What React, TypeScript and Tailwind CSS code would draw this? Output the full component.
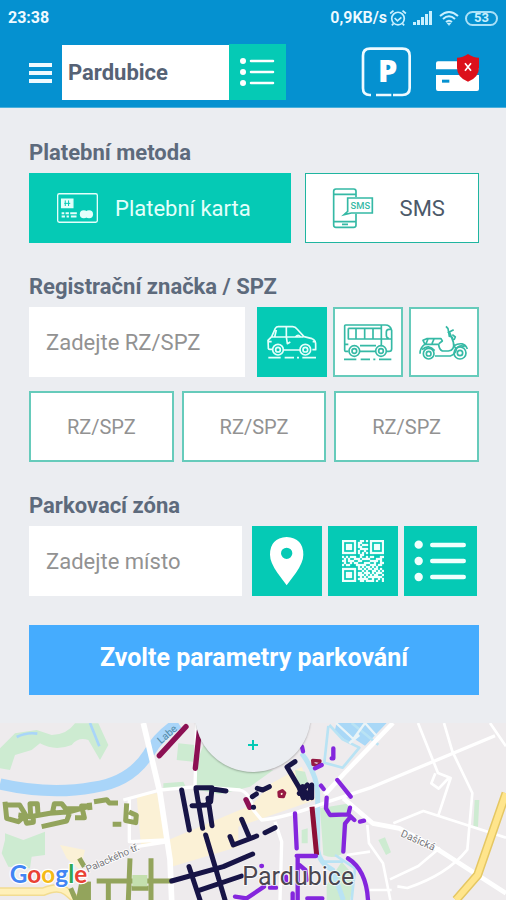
import type { ReactNode } from "react";

function StatusBar() {
  return (
    <div className="flex h-9 items-center justify-between px-2 text-base font-bold">
      <span>23:38</span>
      <div className="flex items-center gap-1.5 font-semibold">
        <span>0,9KB/s</span>
        <svg className="-ml-1 h-[18px] w-[18px]" viewBox="0 0 16 16" fill="none" stroke="#c9f0ff" strokeWidth="1.5">
          <circle cx="8" cy="8.500" r="5.6" />
          <path d="M5 8l2.5 2.5L11 7.500M1 4l3-2.6M15 4l-3-2.6M4 13l-1.5 1.5M12 13l1.5 1.5" />
        </svg>
        <svg className="h-4 w-5" viewBox="0 0 20 16" fill="#c9f0ff">
          <path d="M0 12h3v3H0zM4 10h3v5H4zM8 7h3v8H8zM12 4h3v11h-3zM16 1h3v14h-3z" />
        </svg>
        <svg className="h-4 w-5" viewBox="0 0 20 16" fill="none" stroke="#c9f0ff" strokeWidth="2">
          <path d="M1 6q9-8 18 0M4 9q6-5.500 12 0M7 12q3-2.500 6 0" />
          <path d="M8 13h4l-2 2.500z" fill="#c9f0ff" strokeWidth="0.500" />
        </svg>
        <span className="flex h-[15px] w-[33px] items-center justify-center rounded-full border-2 border-[#a9e0f7] text-[13px] font-bold text-[#c9f0ff]">
          53
        </span>
      </div>
    </div>
  );
}

function Header() {
  return (
    <header className="h-[108px] border-b border-[#4ab0dc] bg-[#0591d0] text-[#effaff]">
      <StatusBar />
      <div className="flex items-center pt-2 pr-[26px] pl-7">
        <button type="button" aria-label="Menu" className="mr-[9px] w-[25px]">
          <svg className="h-6 w-full" viewBox="0 0 25 24" stroke="currentColor" strokeWidth="4">
            <path d="M1 5h23M1 13h23M1 21h23" />
          </svg>
        </button>
        <input
          aria-label="Město"
          defaultValue="Pardubice"
          className="h-[55px] w-0 max-w-[167px] grow bg-white px-1.5 text-[22px] font-bold text-[#566275] outline-none"
        />
        <button type="button" aria-label="Seznam měst" className="h-[56px] w-[57px] bg-[#05cab5]">
          <svg className="h-full w-full" viewBox="0 0 57 56" fill="#fff" stroke="#fff" strokeLinecap="round">
            <path d="M22 17h22M22 28h22M22 39h22" strokeWidth="2.500" />
            <path d="M14 17h.01M14 28h.01M14 39h.01" strokeWidth="6" />
          </svg>
        </button>
        <div className="ml-auto flex items-center gap-6">
          <button type="button" aria-label="Parkování">
            <svg className="h-[51px] w-[50px]" viewBox="327 142 150 153" fill="none" stroke="currentColor" strokeWidth="8">
              <path d="M357 286h-4q-20 0-20-20V168q0-21 21-21h97q22 0 22 21v97q0 21-22 21h-28M372 286h46" />
              <text x="407" y="247" textAnchor="middle" fontFamily="Open Sans, sans-serif" fontWeight="800" fontSize="92" fill="#fff" stroke="none">
                P
              </text>
            </svg>
          </button>
          <button type="button" aria-label="Platební karta není aktivní">
            <svg className="h-[39px] w-[45px]" viewBox="546 159 135 117">
              <path d="M555 184h123v24H549v-18q0-6 6-6zM549 225h129v42q0 6-6 6H555q-6 0-6-6z" fill="#fff" />
              <path d="M567 239h22v9h-22z" fill="#0591d0" />
              <path d="M645 162q15 11 33 11v30q0 29-33 42-33-13-33-42v-30q18 0 33-11z" fill="#dc101b" />
              <path d="M636 190l18 22M654 190l-18 22" stroke="#fff" strokeWidth="5" />
            </svg>
          </button>
        </div>
      </div>
    </header>
  );
}

function Tile({ label, active, className = "w-[70px]", children }: { label: string; active?: boolean; className?: string; children: ReactNode }) {
  return (
    <button
      type="button"
      aria-label={label}
      aria-pressed={!!active}
      className={`h-[70px] shrink-0 ${className} ${active ? "bg-[#05cab5] text-[#e4fffb]" : "bg-white text-[#35b9a5] ring-2 ring-[#66cbbb] ring-inset"}`}
    >
      {children}
    </button>
  );
}

function CarIcon() {
  return (
    <svg className="h-full w-full" viewBox="35 35 210 210" fill="none" stroke="currentColor" strokeWidth="5" strokeLinejoin="round">
      <path d="M82 162H73q-5 0-4-7l-1-20 11-11 11-25q3-5 9-5h43q8 0 13 7l21 23 24 6q12 4 11 20v13h-10M113 164h51M79 125h95M123 94v31l3 20 9-5M93 104l-5 21M150 125q9-10 15-1M68 139h11M202 139h10" />
      <circle cx="98" cy="163" r="16" />
      <circle cx="98" cy="163" r="7" />
      <circle cx="180" cy="163" r="16" />
      <circle cx="180" cy="163" r="7" />
      <path d="M69 187h37M118 187h28M155 187h6M171 187h41" />
    </svg>
  );
}

function BusIcon() {
  return (
    <svg className="h-full w-full" viewBox="263 35 210 210" fill="none" stroke="currentColor" strokeWidth="5" strokeLinejoin="round">
      <path d="M309 168h-9q-2 0-2-3V91q0-2 3-2h119q15 0 19 16v55q0 8-8 8h-7M344 168h46M309 99h99M309 99v32h130M332 99v32M358 99v32M383 99v32M408 89v64M439 102h-8q-8 0-8 8v10q0 8 8 10M344 151h48M298 147h11" />
      <circle cx="327" cy="167" r="16" />
      <circle cx="327" cy="167" r="7" />
      <circle cx="407" cy="167" r="16" />
      <circle cx="407" cy="167" r="7" />
      <path d="M296 192h37M346 192h28M384 192h6M401 192h37" />
    </svg>
  );
}

function ScooterIcon() {
  return (
    <svg className="h-full w-full" viewBox="491 35 210 210" fill="none" stroke="currentColor" strokeWidth="5" strokeLinejoin="round">
      <path d="M524 175q0-18 14-28h42q1 15 11 20h18q20-2 15-26l-10-27-7-4M602 93l6 7 4 23 9 3 5 24 7 13q-3 14-18 19h-46M612 110l13-7M621 118l9 7-4 9M538 145l-5-10 11-5h43l4 7-10 8M548 131l-6 14M560 145l6-14M624 152q32-17 42 9M631 163q10-16 27-9M530 163q20-18 38 3" />
      <circle cx="550" cy="175" r="16" />
      <circle cx="550" cy="175" r="7" />
      <circle cx="644" cy="173" r="18" />
      <circle cx="644" cy="173" r="8" />
    </svg>
  );
}

const QR_ROWS = [
  "111111100110101111111",
  "100000101100001000001",
  "101110101011101011101",
  "101110101100001011101",
  "101110100111101011101",
  "100000101001001000001",
  "111111101010101111111",
  "000000000110000000000",
  "101011100100101100011",
  "010100111011110001110",
  "110111001100001111010",
  "010010110001110010011",
  "101100011111001110110",
  "000000001010110101000",
  "111111101101011011010",
  "100000100010100110101",
  "101110101101110101110",
  "101110101110101011001",
  "101110100101011111110",
  "100000101111100100101",
  "111111100110111101001",
];

function QrIcon() {
  const path = QR_ROWS.map((row, y) => [...row].map((cell, x) => (cell === "1" ? `M${x} ${y}h1v1h-1z` : "")).join("")).join("");
  return (
    <svg className="mx-auto h-[42px] w-[42px]" viewBox="0 0 21 21" fill="#effffc" stroke="#effffc" strokeWidth="0.15">
      <path d={path} />
    </svg>
  );
}

function StreetMap() {
  return (
    <svg className="block h-[177px] w-full" viewBox="0 24 1518 531" preserveAspectRatio="xMidYMid slice" fill="none" strokeLinejoin="round" role="img" aria-label="Mapa Pardubic">
      <rect y="24" width="1518" height="531" fill="#eeebed" />
      <g fill="#fbf1d6">
        <path d="M410 245l65-12 18 140-70 20zM505 375l250-105 60-65 90-50 40 100-230 80v60l-200 60zM180 390l75 15-15 60-40-35z" />
      </g>
      <g fill="#cdebd1">
        <path d="M0 100l45-45 65-10 45 15q45 0 70-35h70l30 65-25 45-35-60q-30-10-50 15-50 20-95-5l-25 20-50 15-15 45-30-5zM535 85l50 5-5 50-50-5zM590 145l20-55 80 60 70 20 60-5-70 50-90 23-75-15zM15 355l55 20 65-25v70l-40 5-5 35-65-5-20-40 10-40zM490 205l60-5 10 22-70 5zM960 280l90-15-15 145q-30 25-65 10zM1135 375l20-8 18 45-15 8zM1424 255h14l-4 80h-14zM905 345l18-5v45h-18zM980 510l45-70 40 45-15 70h-70zM885 165l30 5 10 35-30 20z" />
      </g>
      <path d="M0 207q150 34 280 10 110-15 165-100 30-55 90-93" stroke="#a9d5f9" strokeWidth="34" />
      <path d="M270 24l28 70M50 66q30-15 62-10" stroke="#a9d5f9" strokeWidth="8" />
      <path d="M1010 24h150l-65 68-35-22-16 12-40-34z" fill="#a9d8f7" />
      <g stroke="#b9e3f4" strokeWidth="8">
        <path d="M988 30l40 43 50 25-50 60-55-15 12-110M1055 24l80 65M1005 420l60 40-10 95M970 440h60" />
      </g>
      <path d="M905 115q45 60 48 120v170q5 40 45 60l32 90" stroke="#b9e3f4" strokeWidth="15" />
      <path d="M1008 24l52 48 35-48M1095 24l45 50M1048 85l30-25" stroke="#eaf4f7" strokeWidth="7" />
      <g stroke="#fff" strokeWidth="10">
        <path d="M430 24l50 210 30 200 5 121" strokeWidth="17" />
        <path d="M370 255l110-30 110-10 130 10q30 8 40 60l25 30q65-5 200-55l130-43 370-155M388 250v130l110-5M590 24l-5 195M410 395l95-15M825 320l20 60-5 175" />
        <path d="M1179 24l-145 150-60 65" strokeWidth="14" />
        <path d="M1030 250l88 75 80 15 110 60 210 135" strokeWidth="14" />
        <path d="M1102 330l5 55 42 60 22 110M1254 24l60 150 38 15-38 115M1332 24l25 85 60 125-15 170q-60 75-180 115l-30-5M1470 24l48 70M1180 325l90-37 248 80M1306 175l-12 30 22 16 30-32M1170 493l85-40 65-55M1110 525h65M1040 420l70-10" strokeWidth="8" />
      </g>
      <path d="M0 530h130q45-20 70 0l30 25" stroke="#f2dc91" strokeWidth="26" />
      <path d="M0 530h130q45-20 70 0l30 25" stroke="#fff0b9" strokeWidth="17" />
      <path d="M1518 235l-40 115-45 130-65 75" stroke="#e5c763" strokeWidth="27" />
      <path d="M1518 235l-40 115-45 130-65 75" stroke="#ffe58c" strokeWidth="18" />
      <g stroke="#93a45c" strokeWidth="15">
        <path d="M15 260l5 50 35 10 22-20-18-30H22M55 300l35 5 60-10 60-5 55-15M92 300l-2-34h22l2 32M75 310l5 15 20-3v-22M158 290l5-24h22l12 15h50M125 335l75-17 8-22M225 308h28l-8-35h20M270 285l-2-22M282 260l38-6 8 10h26M380 265l-3 52 30 6 2-22-22-10M338 328h26M238 430l15 25M290 498h225M390 430l-5 125M453 430v125M325 500v55M212 520l15 35M265 500v55M395 520h50" />
      </g>
      <path d="M397 480h45v34h-45z" fill="#c4dfae" />
      <path d="M238 500h34v55h-44z" fill="#93a45c" />
      <g stroke="#8c1053" strokeWidth="16" strokeLinecap="round">
        <path d="M478 122l80-87M598 48l-12 112M738 254l11 23" />
      </g>
      <path d="M936 275l14 145" stroke="#8c1036" strokeWidth="15" />
      <g stroke="#951943" strokeWidth="10">
        <path d="M837 232l10-5 7 7-4 11-12-1zM938 136l22 2-5 15-16-5z" />
      </g>
      <g stroke="#171446" strokeWidth="15" strokeLinecap="round">
        <path d="M545 225l23 120M588 222l20 118M588 218h48l-4 42-14 10-42 2M636 222l42 6M624 250l12 82M725 313l23 54M690 365l10 25 70-27M795 353l30-15M515 498l155-43 88-38M617 360l58 195M567 455l33 100M595 527l130-44M885 140l-24 16 35 59 14 34M898 235l24-25M908 215l15 35 12-40v38M757 245l12-8M772 220l16 5 20-10M760 277h1" />
      </g>
      <g stroke="#8426dd" strokeWidth="13" strokeLinecap="round">
        <path d="M906 95l3 14M1000 100v30h-5M945 160l20-10M1012 195l40 50M963 212l8 10M980 248l-2 32 12 20 55-2 5-20M1045 298l18 17M1080 320l12-3M1048 310l-13 16-5 84M885 295l5 105M890 423h58M893 430v125M898 450l18 15 4 30M1044 430q55 35 60 125M784 453h2M705 545l35 5 52-35M810 518h18M858 485v14M878 535v20M922 550h45" />
      </g>
      <g fill="#77777b" fontFamily="Roboto, sans-serif" fontSize="31" stroke="#fff" strokeWidth="5" paintOrder="stroke">
        <text transform="translate(483 88) rotate(-41)" fill="#538baa" stroke="none">Labe</text>
        <text transform="translate(263 473) rotate(-24)" fontSize="30">Palackého tř.</text>
        <text transform="translate(1200 363) rotate(24)">Dašická</text>
      </g>
      <text x="727" y="510" fill="#4b4750" fontFamily="Roboto, sans-serif" fontSize="75" stroke="#fff" strokeOpacity="0.700" strokeWidth="6" paintOrder="stroke">
        Pardubice
      </text>
      <text x="29" y="504" fontFamily="Lato, sans-serif" fontSize="73" fontWeight="700" stroke="#fff" strokeWidth="7" paintOrder="stroke">
        <tspan fill="#4285f4">G</tspan><tspan fill="#e94235">o</tspan><tspan fill="#f5ba18">o</tspan><tspan fill="#4285f4">g</tspan><tspan fill="#34a853">l</tspan><tspan fill="#e94235">e</tspan>
      </text>
    </svg>
  );
}

const labelClass = "mb-1.5 block text-[22px] leading-7 font-bold text-[#5d6a7c]";
const fieldClass = "h-[70px] w-0 min-w-0 grow bg-white px-[17px] text-[22px] text-[#555] outline-none placeholder:text-[#929292]";

export default function App() {
  return (
    <div className="bg-[#ebedf1] font-[Roboto,sans-serif]">
      <Header />
      <main className="pt-[31px] pr-[27px] pb-7 pl-[29px]">
        <section>
          <h2 className={labelClass}>Platební metoda</h2>
          <div className="grid grid-cols-[3fr_2fr] gap-[14px]">
            <button type="button" aria-pressed="true" className="flex h-[70px] items-center gap-4 bg-[#05cab5] pl-[27px] text-[22px] text-[#e4fffb]">
              <svg className="h-8 w-[43px]" viewBox="165 187 130 96" fill="none" stroke="currentColor" strokeWidth="4">
                <rect x="170" y="192" width="120" height="86" rx="5" />
                <path d="M182 208h34v26h-34z" fill="currentColor" />
                <path d="M193 212v17M203 212v17M190 221h18" stroke="#05cab5" strokeWidth="3" />
                <path d="M182 251h8M194 251h10M208 251h20M182 261h10M197 261h7M210 261h17" strokeWidth="6" />
                <circle cx="249" cy="254" r="12" fill="currentColor" stroke="none" />
                <circle cx="265" cy="254" r="12" fill="currentColor" stroke="none" />
              </svg>
              Platební karta
            </button>
            <button type="button" aria-pressed="false" className="flex h-[70px] items-center gap-[26px] border border-[#1fb5a0] bg-white pl-[26px] text-[22px] text-[#4c5969]">
              <svg className="h-[42px] w-[42px]" viewBox="234 81 126 126" fill="none" stroke="#35b9a5" strokeWidth="5">
                <path d="M306 111V94q0-7-7-7h-53q-7 0-7 7v101q0 7 7 7h53q7 0 7-7v-34M239 103h67M239 185h67M264 193h18" />
                <path d="M281 114h74v45h-63l-22 5 11-10z" fill="#fff" />
                <text x="319" y="148" textAnchor="middle" fontFamily="Roboto, sans-serif" fontSize="28" fontWeight="500" fill="#35b9a5" stroke="none">
                  SMS
                </text>
              </svg>
              SMS
            </button>
          </div>
        </section>

        <section className="mt-[30px]">
          <label htmlFor="plate" className={labelClass}>Registrační značka / SPZ</label>
          <div className="flex gap-1.5">
            <input id="plate" placeholder="Zadejte RZ/SPZ" className={`${fieldClass} mr-1.5`} />
            <Tile label="Auto" active><CarIcon /></Tile>
            <Tile label="Autobus"><BusIcon /></Tile>
            <Tile label="Motocykl"><ScooterIcon /></Tile>
          </div>
          <div className="mt-[14px] grid grid-cols-3 gap-2">
            {[1, 2, 3].map((slot) => (
              <button key={slot} type="button" className="h-[71px] border-2 border-[#66cbbb] bg-white text-xl text-[#929292]">
                RZ/SPZ
              </button>
            ))}
          </div>
        </section>

        <section className="mt-[30px]">
          <label htmlFor="zone" className={labelClass}>Parkovací zóna</label>
          <div className="flex gap-1.5 pr-0.5">
            <input id="zone" placeholder="Zadejte místo" className={`${fieldClass} mr-1`} />
            <Tile label="Vybrat na mapě" active>
              <svg className="h-full w-full" viewBox="25 33 210 210" fill="#fff">
                <path fillRule="evenodd" d="M129 66q-50 3-50 53 0 22 22 54l28 38 28-38q22-32 22-54 0-50-50-53zM129 98a17 17 0 1 1 0 34 17 17 0 0 1 0-34z" />
              </svg>
            </Tile>
            <Tile label="Naskenovat QR kód" active><QrIcon /></Tile>
            <Tile label="Seznam zón" active className="w-[73px]">
              <svg className="h-full w-full" viewBox="473 33 219 210" stroke="#f1fffd" strokeLinecap="round">
                <path d="M558 90h94M558 138h94M558 186h94" strokeWidth="14" />
                <path d="M517 89h.1M517 138h.1M517 186h.1" strokeWidth="25" />
              </svg>
            </Tile>
          </div>
        </section>

        <button type="submit" className="mt-[29px] h-[70px] w-full bg-[#45acfe] pb-1 text-[25px] font-bold text-white">
          Zvolte parametry parkování
        </button>
      </main>

      <div className="relative overflow-hidden">
        <StreetMap />
        <button
          type="button"
          aria-label="Rozbalit mapu"
          className="absolute -top-[67px] left-1/2 flex size-[116px] -translate-x-1/2 items-end justify-center rounded-full bg-[#ebedf1] pb-[21px] shadow-[0_1px_2px_#0004]"
        >
          <svg className="size-3" viewBox="0 0 12 12" stroke="#05cab5" strokeWidth="2">
            <path d="M6 1v10M1 6h10" />
          </svg>
        </button>
      </div>
    </div>
  );
}
